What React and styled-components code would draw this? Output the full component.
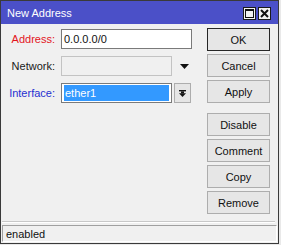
import styled, { createGlobalStyle } from "styled-components";

const GlobalStyle = createGlobalStyle`
  html, body {
    margin: 0;
    padding: 0;
    background: #e9e9e9;
  }
  body {
    font-family: "Liberation Sans", Arial, sans-serif;
    font-size: 11px;
  }
`;

const Window = styled.div`
  width: 277px;
  height: 242px;
  border: 1px solid #3a3a3a;
  background: #f0f0f0;
  display: flex;
  flex-direction: column;
`;

const TitleBar = styled.div`
  height: 23px;
  flex: none;
  background: #4b50c8;
  color: #fff;
  display: flex;
  align-items: center;
  padding: 0 7px 0 6px;
  font-size: 11px;
`;

const Title = styled.div`
  flex: 1;
  padding-top: 1px;
`;

const TitleButtons = styled.div`
  display: flex;
  gap: 2px;
  margin-top: 2px;
`;

const TitleButton = styled.div`
  width: 11px;
  height: 11px;
  border: 1px solid #1a1a1a;
  background: #f2f2f2;
  display: flex;
  align-items: center;
  justify-content: center;
`;

const Body = styled.div`
  flex: 1;
  display: flex;
  padding: 4px 7px 0 0;
  gap: 15px;
`;

const Form = styled.div`
  display: grid;
  grid-template-columns: 58px 111px 18px;
  grid-auto-rows: 20px;
  column-gap: 2px;
  row-gap: 7px;
  margin-top: 1px;
  align-content: start;
`;

const Label = styled.div`
  text-align: right;
  align-self: center;
  margin-right: 4px;
  color: ${(p) => p.color || "#1a1a1a"};
`;

const Field = styled.div`
  grid-column: ${(p) => (p.wide ? "2 / 4" : "2")};
  box-sizing: border-box;
  border: 1px solid ${(p) => (p.disabled ? "#c3c3c3" : "#7a7a7a")};
  background: ${(p) => (p.disabled ? "#f0f0f0" : "#fff")};
  display: flex;
  align-items: center;
  padding: 1px 2px;
  color: #111;
`;

const Selected = styled.div`
  flex: 1;
  align-self: stretch;
  background: #3399ff;
  color: #fff;
  display: flex;
  align-items: center;
  padding-left: 1px;
`;

const Arrow = styled.div`
  display: flex;
  align-items: center;
  justify-content: center;
  padding-left: 2px;
`;

const SmallButton = styled.div`
  width: 17px;
  box-sizing: border-box;
  border: 1px solid #adadad;
  background: #e5e5e5;
  display: flex;
  align-items: center;
  justify-content: center;
`;

const ButtonColumn = styled.div`
  display: flex;
  flex-direction: column;
  gap: 3px;
  width: 63px;
`;

const Button = styled.div`
  height: 23px;
  box-sizing: border-box;
  border: 1px solid ${(p) => (p.primary ? "#262626" : "#adadad")};
  background: #e6e6e6;
  color: #111;
  display: flex;
  align-items: center;
  justify-content: center;
  margin-top: ${(p) => (p.spaced ? "7px" : "0")};
`;

const Separator = styled.div`
  height: 1px;
  background: #c8c8c8;
  margin: 0 3px 2px 1px;
  border-bottom: 1px solid #fff;
`;

const StatusBar = styled.div`
  height: 17px;
  margin: 0 1px 1px 1px;
  box-sizing: border-box;
  border: 1px solid #a0a0a0;
  border-right-color: #fff;
  border-bottom-color: #fff;
  display: flex;
  align-items: center;
  padding-left: 3px;
  color: #111;
`;

const DownTriangle = () => (
  <svg width="9" height="5" viewBox="0 0 9 5">
    <polygon points="0,0 9,0 4.5,5" fill="#111" />
  </svg>
);

const DropIcon = () => (
  <svg width="7" height="7" viewBox="0 0 7 7">
    <rect x="0" y="0" width="7" height="1.4" fill="#111" />
    <rect x="2" y="1.4" width="3" height="2" fill="#111" />
    <polygon points="0,3.2 7,3.2 3.5,7" fill="#111" />
  </svg>
);

const App = () => (
  <>
    <GlobalStyle />
    <Window>
      <TitleBar>
        <Title>New Address</Title>
        <TitleButtons>
          <TitleButton>
            <svg width="9" height="9" viewBox="0 0 9 9">
              <rect x="0.5" y="0.5" width="8" height="8" fill="none" stroke="#111" />
              <rect x="0" y="0" width="9" height="2" fill="#111" />
            </svg>
          </TitleButton>
          <TitleButton>
            <svg width="9" height="9" viewBox="0 0 9 9">
              <path d="M1 1 L8 8 M8 1 L1 8" stroke="#111" strokeWidth="2" />
            </svg>
          </TitleButton>
        </TitleButtons>
      </TitleBar>
      <Body>
        <Form>
          <Label color="#e3141c">Address:</Label>
          <Field wide>0.0.0.0/0</Field>
          <Label>Network:</Label>
          <Field disabled />
          <Arrow>
            <DownTriangle />
          </Arrow>
          <Label color="#1f2fd0">Interface:</Label>
          <Field>
            <Selected>ether1</Selected>
          </Field>
          <SmallButton>
            <DropIcon />
          </SmallButton>
        </Form>
        <ButtonColumn>
          <Button primary>OK</Button>
          <Button>Cancel</Button>
          <Button>Apply</Button>
          <Button spaced>Disable</Button>
          <Button>Comment</Button>
          <Button>Copy</Button>
          <Button>Remove</Button>
        </ButtonColumn>
      </Body>
      <Separator />
      <StatusBar>enabled</StatusBar>
    </Window>
  </>
);

export default App;
